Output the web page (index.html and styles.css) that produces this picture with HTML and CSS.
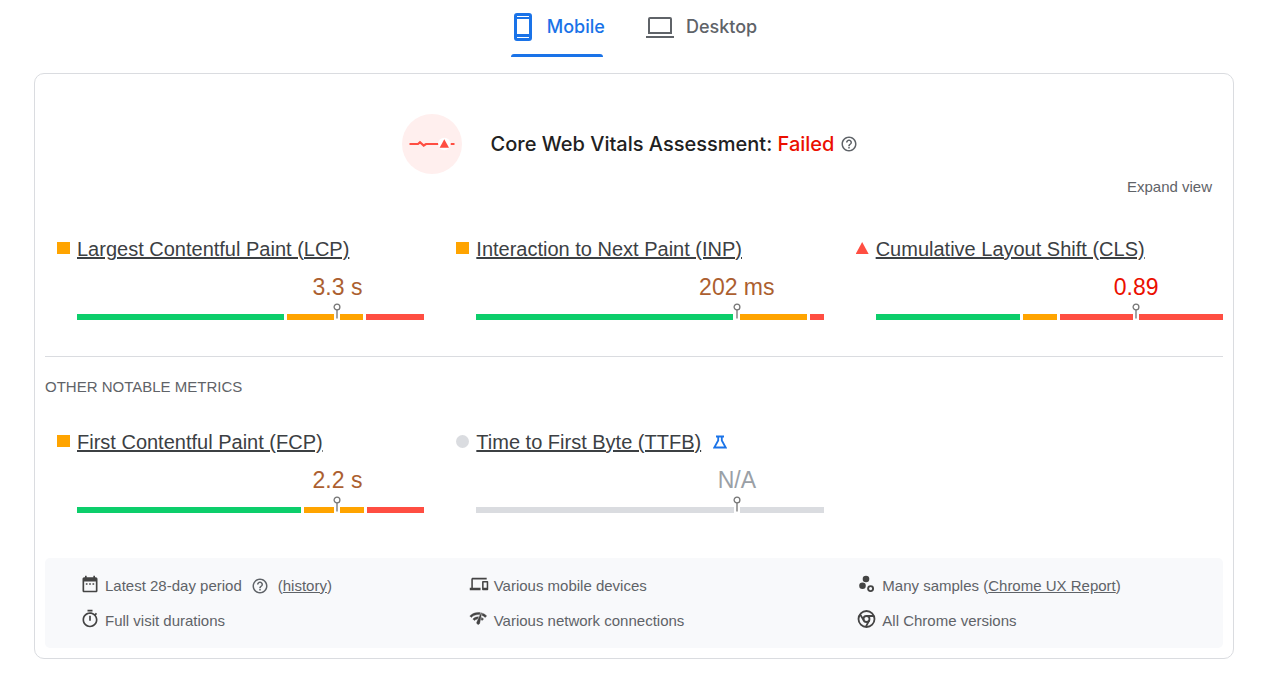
FILE: index.html
```html
<!DOCTYPE html>
<html lang="en">
<head>
<meta charset="utf-8">
<title>Core Web Vitals</title>
<link rel="stylesheet" href="styles.css">
</head>
<body>
<svg class="defs" aria-hidden="true">
  <symbol id="help" viewBox="0 0 24 24"><path d="M11 18h2v-2h-2v2zm1-16C6.48 2 2 6.48 2 12s4.48 10 10 10 10-4.48 10-10S17.52 2 12 2zm0 18c-4.41 0-8-3.59-8-8s3.59-8 8-8 8 3.59 8 8-3.59 8-8 8zm0-14c-2.21 0-4 1.79-4 4h2c0-1.1.9-2 2-2s2 .9 2 2c0 2-3 1.75-3 5h2c0-2.25 3-2.5 3-5 0-2.21-1.79-4-4-4z"/></symbol>
  <symbol id="pin" viewBox="0 0 8 17"><path d="M1 11h6v6H1z" fill="#fff"/><path d="M4 6.500v9" stroke="#9a9a9a" stroke-width="1.800"/><circle cx="4" cy="4" r="2.900" fill="#fff" stroke="#757575" stroke-width="1.300"/></symbol>
</svg>
<nav class="tabs" role="tablist">
  <button class="tab tab-active" role="tab" aria-selected="true">
    <svg width="24" height="28" viewBox="0 0 24 28"><path fill="currentColor" fill-rule="evenodd" d="M6 0h12a3 3 0 0 1 3 3v22a3 3 0 0 1-3 3H6a3 3 0 0 1-3-3V3a3 3 0 0 1 3-3zM6 3v1h12V3zM6 6v15h12V6zM6 24v1h12v-1z"/></svg>
    Mobile
  </button>
  <button class="tab" role="tab" aria-selected="false">
    <svg width="28" height="28" viewBox="0 0 28 28"><path fill="none" stroke="currentColor" stroke-width="2" d="M4 5h20a1 1 0 0 1 1 1v14H3V6a1 1 0 0 1 1-1zM0 24h28"/></svg>
    Desktop
  </button>
</nav>
<main class="card">
  <header class="assessment">
    <svg width="60" height="60" viewBox="0 0 60 60"><circle cx="30" cy="30" r="30" fill="#ffefee"/><path fill="none" stroke="#ff4e42" stroke-width="2.200" d="M7.500 30H16l2-1.800 3.700 3.300L24 30h13M48.500 30h4"/><circle cx="42.300" cy="30" r="6.200" fill="#fff"/><path fill="#ff4e42" d="M42.300 25.200l4.700 8.500h-9.400z"/></svg>
    <h1 class="assessment-title">Core Web Vitals Assessment: <span class="failed">Failed</span></h1>
    <button class="help" aria-label="About the assessment"><svg width="18" height="18"><use href="#help"/></svg></button>
  </header>
  <div class="toolbar"><button class="expand">Expand view</button></div>
  <section class="metrics">
    <article class="metric">
      <span class="marker square"></span>
      <h2 class="metric-title"><a href="#lcp">Largest Contentful Paint (LCP)</a></h2>
      <div class="reading average"><span class="value">3.3 s</span><svg class="pin" width="8" height="17"><use href="#pin"/></svg></div>
      <div class="bar"><i class="good" style="flex-grow:207"></i><i class="fair" style="flex-grow:77"></i><i class="poor" style="flex-grow:58"></i></div>
    </article>
    <article class="metric">
      <span class="marker square"></span>
      <h2 class="metric-title"><a href="#inp">Interaction to Next Paint (INP)</a></h2>
      <div class="reading average"><span class="value">202 ms</span><svg class="pin" width="8" height="17"><use href="#pin"/></svg></div>
      <div class="bar"><i class="good" style="flex-grow:256"></i><i class="fair" style="flex-grow:71"></i><i class="poor" style="flex-grow:14"></i></div>
    </article>
    <article class="metric">
      <span class="marker triangle"></span>
      <h2 class="metric-title"><a href="#cls">Cumulative Layout Shift (CLS)</a></h2>
      <div class="reading slow"><span class="value">0.89</span><svg class="pin" width="8" height="17"><use href="#pin"/></svg></div>
      <div class="bar"><i class="good" style="flex-grow:144"></i><i class="fair" style="flex-grow:34"></i><i class="poor" style="flex-grow:163"></i></div>
    </article>
  </section>
  <h2 class="subheading">OTHER NOTABLE METRICS</h2>
  <section class="metrics">
    <article class="metric">
      <span class="marker square"></span>
      <h2 class="metric-title"><a href="#fcp">First Contentful Paint (FCP)</a></h2>
      <div class="reading average"><span class="value">2.2 s</span><svg class="pin" width="8" height="17"><use href="#pin"/></svg></div>
      <div class="bar"><i class="good" style="flex-grow:224"></i><i class="fair" style="flex-grow:61"></i><i class="poor" style="flex-grow:57"></i></div>
    </article>
    <article class="metric">
      <span class="marker circle"></span>
      <h2 class="metric-title"><a href="#ttfb">Time to First Byte (TTFB)</a>
        <svg width="14" height="14" viewBox="0 0 14 14"><path fill="none" stroke="#1a73e8" stroke-width="1.800" d="M3 1.500h8M5.200 1v4.500L1.300 12.500h11.400L8.800 5.500V1"/></svg></h2>
      <div class="reading none"><span class="value">N/A</span><svg class="pin" width="8" height="17"><use href="#pin"/></svg></div>
      <div class="bar"><i class="empty" style="flex-grow:1"></i></div>
    </article>
  </section>
  <footer class="facts">
    <div class="fact"><svg class="fact-icon" width="20" height="20" viewBox="0 0 24 24"><path d="M9 11H7v2h2v-2zm4 0h-2v2h2v-2zm4 0h-2v2h2v-2zm2-7h-1V2h-2v2H8V2H6v2H5c-1.110 0-1.990.900-1.990 2L3 20c0 1.100.890 2 2 2h14c1.100 0 2-.900 2-2V6c0-1.100-.900-2-2-2zm0 16H5V9h14v11z"/></svg><span>Latest 28-day period</span><button class="help" aria-label="About the collection period"><svg width="18" height="18"><use href="#help"/></svg></button><span>(<a href="#history">history</a>)</span></div>
    <div class="fact"><svg class="fact-icon" width="20" height="20" viewBox="-1 -1 26 26"><path d="M4 6h18V4H4c-1.100 0-2 .900-2 2v11H0v3h14v-3H4V6zm19 2h-6c-.550 0-1 .450-1 1v10c0 .550.450 1 1 1h6c.550 0 1-.450 1-1V9c0-.550-.450-1-1-1zm-1 9h-4v-7h4v7z"/></svg><span>Various mobile devices</span></div>
    <div class="fact"><svg class="fact-icon" width="20" height="20" viewBox="0 0 20 20"><circle cx="9" cy="5" r="3.300"/><circle cx="5.500" cy="11.800" r="3.300"/><circle cx="13.600" cy="14.600" r="2.500" fill="none" stroke="currentColor" stroke-width="1.900"/></svg><span>Many samples (<a href="#crux">Chrome UX Report</a>)</span></div>
    <div class="fact"><svg class="fact-icon" width="20" height="20" viewBox="0 0 24 24"><path d="M15 1H9v2h6V1zm-4 13h2V8h-2v6zm8.030-6.610l1.420-1.420c-.430-.510-.900-.990-1.410-1.410l-1.420 1.420C16.070 4.740 14.120 4 12 4c-4.970 0-9 4.030-9 9s4.020 9 9 9 9-4.030 9-9c0-2.120-.740-4.070-1.970-5.610zM12 20c-3.870 0-7-3.130-7-7s3.130-7 7-7 7 3.130 7 7-3.130 7-7 7z"/></svg><span>Full visit durations</span></div>
    <div class="fact"><svg class="fact-icon" width="20" height="20" viewBox="0 0 26 26"><path stroke="currentColor" stroke-width=".5" d="M15.900 5c-.170 0-.320.090-.410.230l-.070.150-5.180 11.650c-.160.290-.260.610-.260.960 0 1.110.900 2.010 2.010 2.010.960 0 1.770-.680 1.960-1.590l.010-.030L16.400 5.500c0-.280-.220-.500-.500-.500zM1 9l2 2c2.880-2.880 6.790-4.080 10.530-3.620l1.190-2.680C9.890 3.840 4.740 5.270 1 9zm20 2l2-2c-1.640-1.640-3.550-2.820-5.590-3.570l-.530 2.820c1.500.620 2.900 1.530 4.120 2.750zm-4 4l2-2c-.800-.800-1.700-1.420-2.660-1.890l-.550 2.920c.420.270.830.590 1.210.970zM5 13l2 2c1.130-1.130 2.560-1.790 4.030-2l1.280-2.880c-2.630-.080-5.300.870-7.310 2.880z"/></svg><span>Various network connections</span></div>
    <div class="fact"><svg class="fact-icon" width="20" height="20" viewBox="0 0 20 20"><g fill="none" stroke="currentColor" stroke-width="1.800"><circle cx="9.500" cy="10" r="8"/><circle cx="9.500" cy="10" r="3"/><path d="M9.500 7h7.300M6.900 11.500L3 5.200M12.100 11.500L8.800 17.900"/></g></svg><span>All Chrome versions</span></div>
  </footer>
</main>
</body>
</html>
```
FILE: styles.css
```css
* { box-sizing: border-box; }
body {
  margin: 0;
  padding: 0 29px 18px 34px;
  background: #fff;
  color: #5f6368;
  font: 15px/20px "Liberation Sans", Arial, sans-serif;
}
h1, h2 { margin: 0; font-weight: 400; }
svg { display: block; flex: none; }
a { color: inherit; text-decoration: underline; }
button { padding: 0; border: 0; background: none; color: inherit; font: inherit; cursor: pointer; }
.defs { position: absolute; width: 0; height: 0; }

.tabs { display: flex; justify-content: center; gap: 41px; margin-bottom: 16px; }
.tab {
  display: flex;
  align-items: center;
  gap: 12px;
  padding: 13px 0 16px;
  font: 500 18px/26px Inter, sans-serif;
}
.tab-active { position: relative; color: #1a73e8; }
.tab-active::after {
  content: "";
  position: absolute;
  left: 0;
  right: 2px;
  bottom: 0;
  height: 3px;
  border-radius: 3px 3px 0 0;
  background: #1a73e8;
}

.card { padding: 10px; border: 1px solid #dadce0; border-radius: 10px; }
.assessment { display: flex; align-items: center; justify-content: center; padding: 30px 8px 0 0; }
.assessment-title { margin: 0 6px 0 29px; color: #212121; font: 500 20px/28px Inter, sans-serif; }
.failed { color: #eb0f00; }
.help { color: #5f6368; }
.help svg, .fact-icon { fill: currentColor; }
.toolbar { display: flex; justify-content: flex-end; padding: 3px 11px 40px 0; }

.metrics { display: grid; grid-template-columns: repeat(3, 1fr); gap: 20px; padding-bottom: 36px; }
.metric { position: relative; padding-left: 32px; }
.metric-title { display: flex; align-items: center; gap: 12px; color: #3c4043; font-size: 20px; line-height: 24px; white-space: nowrap; }
.marker { position: absolute; left: 12px; top: 5px; width: 13px; height: 12px; }
.square { background: #ffa400; }
.circle { height: 13px; border-radius: 50%; background: #dadce0; }
.triangle { background: #ff4e42; clip-path: polygon(50% 0, 100% 100%, 0 100%); }
.reading { position: relative; display: flex; height: 53px; padding: 12px 0 0 50%; font-size: 23px; line-height: 28px; }
.value { width: 100%; text-align: center; }
.average { color: #ac5f30; }
.slow { color: #eb0f00; }
.none { color: #9aa0a6; }
.pin { position: absolute; left: calc(75% - 4px); bottom: -6px; z-index: 1; }
.bar { display: flex; gap: 3px; height: 6px; }
.bar i { flex: 1 1 0; }
.good { background: #0cce6b; }
.fair { background: #ffa400; }
.poor { background: #ff4e42; }
.empty { background: #dadce0; }

.subheading { padding: 20px 0 33px; border-top: 1px solid #dadce0; font-size: 15px; line-height: 20px; }
.facts {
  display: grid;
  grid-template-columns: repeat(3, 1fr);
  gap: 11px 34px;
  margin-top: 9px;
  padding: 16px 11px 15px 35px;
  border-radius: 5px;
  background: #f8f9fb;
}
.fact { display: flex; align-items: center; height: 24px; white-space: nowrap; }
.fact-icon { margin: 0 5px 4px 0; color: #444; }
.fact .help { margin: 0 9px; }
```
